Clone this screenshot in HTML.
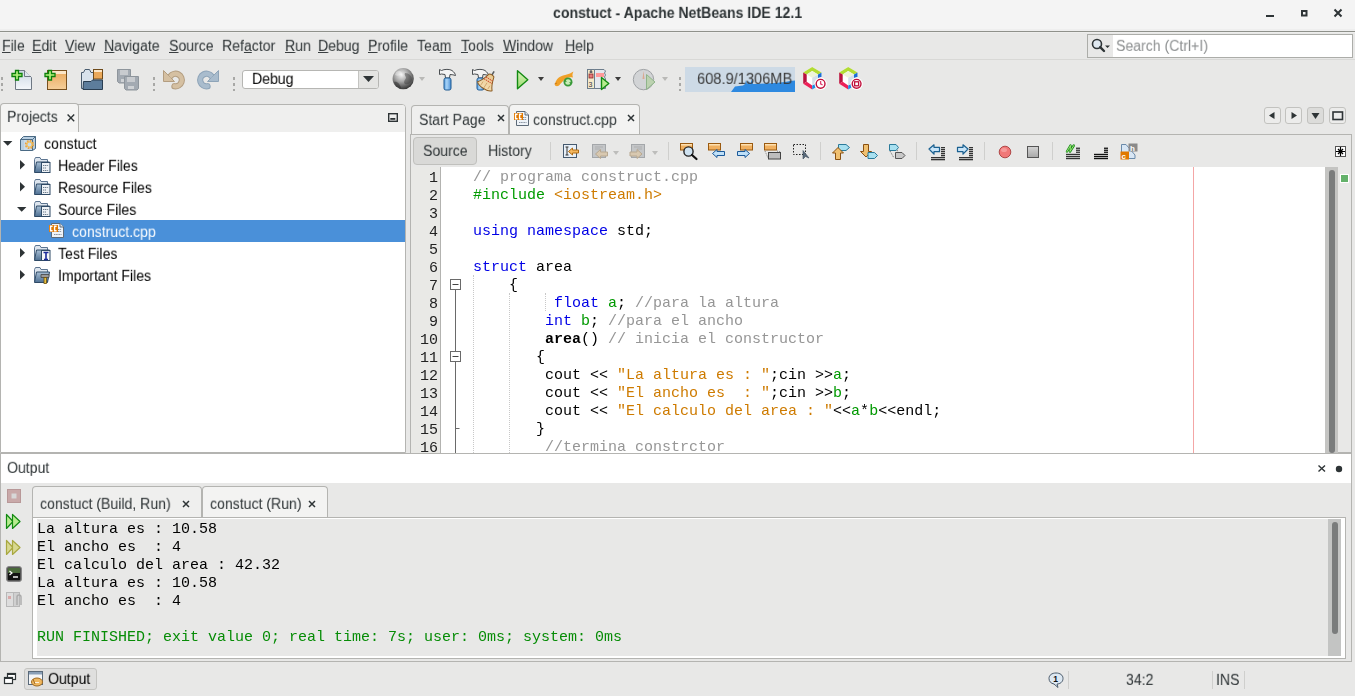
<!DOCTYPE html>
<html><head><meta charset="utf-8">
<style>
*{box-sizing:border-box}
html,body{margin:0;padding:0}
body{width:1355px;height:696px;overflow:hidden;position:relative;background:#e8e8e7;font-family:"Liberation Sans",sans-serif;color:#2e3436}
.a{position:absolute}
.t{position:absolute;white-space:pre}
.m{position:absolute;white-space:pre;font-family:"Liberation Mono",monospace;line-height:18px}
svg{position:absolute;overflow:visible}
.m,.t{will-change:transform}
</style></head><body>
<div class="a" style="left:0px;top:0px;width:1355px;height:31px;background:#f4f4f4;"></div>
<div class="a" style="left:0px;top:29px;width:1355px;height:2px;background:#eeeeee;"></div>
<div class="a" style="left:0px;top:31px;width:1355px;height:1px;background:#8f918b;"></div>
<div class="a" style="left:0px;top:32px;width:1355px;height:1px;background:#eeeeed;"></div>
<div class="t" style="left:553px;top:4.46px;font-size:16px;line-height:18px;color:#2e3436;font-weight:bold;transform:scale(0.88,0.94);transform-origin:0 14.5px;">constuct - Apache NetBeans IDE 12.1</div>
<div class="a" style="left:1266px;top:15px;width:8px;height:2px;background:#2e3436;"></div>
<svg style="left:1300px;top:9px" width="8" height="8" viewBox="0 0 8 8"><rect x="2" y="2" width="4.5" height="4.5" fill="none" stroke="#2e3436" stroke-width="2"/></svg>
<svg style="left:1333px;top:8px" width="10" height="10" viewBox="0 0 10 10"><path d="M1.5 1.5L8.5 8.5M8.5 1.5L1.5 8.5" stroke="#2e3436" stroke-width="2"/></svg>
<div class="t" style="left:2px;top:37.46px;font-size:16px;line-height:18px;color:#2e3436;font-weight:normal;transform:scale(0.88,0.94);transform-origin:0 14.5px;"><span style="text-decoration:underline">F</span>ile</div>
<div class="t" style="left:32px;top:37.46px;font-size:16px;line-height:18px;color:#2e3436;font-weight:normal;transform:scale(0.88,0.94);transform-origin:0 14.5px;"><span style="text-decoration:underline">E</span>dit</div>
<div class="t" style="left:65px;top:37.46px;font-size:16px;line-height:18px;color:#2e3436;font-weight:normal;transform:scale(0.88,0.94);transform-origin:0 14.5px;"><span style="text-decoration:underline">V</span>iew</div>
<div class="t" style="left:104px;top:37.46px;font-size:16px;line-height:18px;color:#2e3436;font-weight:normal;transform:scale(0.88,0.94);transform-origin:0 14.5px;"><span style="text-decoration:underline">N</span>avigate</div>
<div class="t" style="left:169px;top:37.46px;font-size:16px;line-height:18px;color:#2e3436;font-weight:normal;transform:scale(0.88,0.94);transform-origin:0 14.5px;"><span style="text-decoration:underline">S</span>ource</div>
<div class="t" style="left:222px;top:37.46px;font-size:16px;line-height:18px;color:#2e3436;font-weight:normal;transform:scale(0.88,0.94);transform-origin:0 14.5px;">Ref<span style="text-decoration:underline">a</span>ctor</div>
<div class="t" style="left:285px;top:37.46px;font-size:16px;line-height:18px;color:#2e3436;font-weight:normal;transform:scale(0.88,0.94);transform-origin:0 14.5px;"><span style="text-decoration:underline">R</span>un</div>
<div class="t" style="left:318px;top:37.46px;font-size:16px;line-height:18px;color:#2e3436;font-weight:normal;transform:scale(0.88,0.94);transform-origin:0 14.5px;"><span style="text-decoration:underline">D</span>ebug</div>
<div class="t" style="left:368px;top:37.46px;font-size:16px;line-height:18px;color:#2e3436;font-weight:normal;transform:scale(0.88,0.94);transform-origin:0 14.5px;"><span style="text-decoration:underline">P</span>rofile</div>
<div class="t" style="left:417px;top:37.46px;font-size:16px;line-height:18px;color:#2e3436;font-weight:normal;transform:scale(0.88,0.94);transform-origin:0 14.5px;">Tea<span style="text-decoration:underline">m</span></div>
<div class="t" style="left:461px;top:37.46px;font-size:16px;line-height:18px;color:#2e3436;font-weight:normal;transform:scale(0.88,0.94);transform-origin:0 14.5px;"><span style="text-decoration:underline">T</span>ools</div>
<div class="t" style="left:503px;top:37.46px;font-size:16px;line-height:18px;color:#2e3436;font-weight:normal;transform:scale(0.88,0.94);transform-origin:0 14.5px;"><span style="text-decoration:underline">W</span>indow</div>
<div class="t" style="left:565px;top:37.46px;font-size:16px;line-height:18px;color:#2e3436;font-weight:normal;transform:scale(0.88,0.94);transform-origin:0 14.5px;"><span style="text-decoration:underline">H</span>elp</div>
<div class="a" style="left:0px;top:59px;width:1355px;height:1px;background:#d8d8d6;"></div>
<div class="a" style="left:1087px;top:34px;width:266px;height:24px;background:#ffffff;border:1px solid #acada9"></div>
<div class="a" style="left:1088px;top:35px;width:25px;height:22px;background:#e8e8e7;"></div>
<svg style="left:1090px;top:37px" width="22" height="18" viewBox="0 0 22 18"><circle cx="7" cy="7" r="4.5" fill="#dfe8f0" stroke="#2e3436" stroke-width="1.6"/><path d="M10.2 10.2L14 14" stroke="#2e3436" stroke-width="2.4" stroke-linecap="round"/><path d="M15 8.5H20L17.5 11Z" fill="#2e3436"/></svg>
<div class="t" style="left:1116px;top:37.46px;font-size:16px;line-height:18px;color:#8b8e8f;font-weight:normal;transform:scale(0.88,0.94);transform-origin:0 14.5px;">Search (Ctrl+I)</div>
<div class="a" style="left:1px;top:77px;width:2px;height:3px;background:#a8a8a6;"></div>
<div class="a" style="left:1px;top:83px;width:2px;height:3px;background:#a8a8a6;"></div>
<div class="a" style="left:1px;top:89px;width:2px;height:2px;background:#a8a8a6;"></div>
<div class="a" style="left:153px;top:77px;width:2px;height:3px;background:#a8a8a6;"></div>
<div class="a" style="left:153px;top:83px;width:2px;height:3px;background:#a8a8a6;"></div>
<div class="a" style="left:153px;top:89px;width:2px;height:2px;background:#a8a8a6;"></div>
<div class="a" style="left:233px;top:77px;width:2px;height:3px;background:#a8a8a6;"></div>
<div class="a" style="left:233px;top:83px;width:2px;height:3px;background:#a8a8a6;"></div>
<div class="a" style="left:233px;top:89px;width:2px;height:2px;background:#a8a8a6;"></div>
<div class="a" style="left:679px;top:77px;width:2px;height:3px;background:#a8a8a6;"></div>
<div class="a" style="left:679px;top:83px;width:2px;height:3px;background:#a8a8a6;"></div>
<div class="a" style="left:679px;top:89px;width:2px;height:2px;background:#a8a8a6;"></div>
<svg style="left:12px;top:69px" width="22" height="22" viewBox="0 0 22 22"><defs><linearGradient id="gp" x1="0" y1="0" x2="0" y2="1"><stop offset="0" stop-color="#cbd7e4"/><stop offset="1" stop-color="#f4f7fa"/></linearGradient></defs>
<path d="M3.5 1.5H12.5L19.5 8.5V20.5H3.5Z" fill="url(#gp)" stroke="#6e7883"/>
<path d="M12.5 1.5V7.5H19" fill="#dde5ee" stroke="#6e7883"/>
<path d="M3.5 1.5h3v3h3.5v3h-3.5v3.5h-3v-3.5h-3.5v-3h3.5z" fill="#b4f07c" stroke="#0a800a" stroke-width="1.3"/></svg>
<svg style="left:45px;top:69px" width="24" height="22" viewBox="0 0 24 22"><defs><linearGradient id="go" x1="0" y1="0" x2="0" y2="1"><stop offset="0" stop-color="#e9a85c"/><stop offset="1" stop-color="#f5cf9a"/></linearGradient></defs>
<rect x="2.5" y="1.5" width="19" height="19" fill="url(#go)" stroke="#77501f"/>
<rect x="3" y="2" width="18" height="3" fill="#fbe6c8"/>
<path d="M3.5 1.5h3v3h3.5v3h-3.5v3.5h-3v-3.5h-3.5v-3h3.5z" fill="#b4f07c" stroke="#0a800a" stroke-width="1.3"/></svg>
<svg style="left:80px;top:68px" width="24" height="23" viewBox="0 0 24 23"><path d="M1.5 4.5H3.5L5 1.5H9.5L11 4.5H13.5V20.5H1.5Z" fill="#d8e2ec" stroke="#4a5d70"/>
<rect x="13.5" y="1.5" width="9" height="9.5" fill="#eaa85a" stroke="#6e4a1a"/><rect x="14" y="2" width="8" height="2" fill="#fbe6c8"/>
<path d="M3.5 13.5H11L12.5 12H22.5V21.5H3Z" fill="#5d7d9c" stroke="#2a3e52"/></svg>
<svg style="left:116px;top:68px" width="24" height="23" viewBox="0 0 24 23"><path d="M1.5 1.5H14.5V13.5L13 15H3L1.5 13.5Z" fill="#a3aab2" stroke="#8e959c"/><rect x="4" y="2" width="8" height="5" fill="#c8cbcf"/><rect x="5" y="11" width="6" height="3" fill="#cfd2d5"/>
<path d="M8.5 8.5H22.5V20.5L21 22H10L8.5 20.5Z" fill="#a3aab2" stroke="#8e959c"/><rect x="11" y="9" width="8" height="5" fill="#c8cbcf"/><rect x="12" y="18" width="6" height="3" fill="#cfd2d5"/></svg>
<svg style="left:162px;top:69px" width="24" height="22" viewBox="0 0 24 22"><path d="M8.34 7.39A6.3 6.3 0 1 1 12.41 17.20" fill="none" stroke="#b39d80" stroke-width="6.2" stroke-linecap="round"/><path d="M8.34 7.39A6.3 6.3 0 1 1 12.41 17.20" fill="none" stroke="#d5c0a2" stroke-width="4.2" stroke-linecap="round"/>
<path d="M1.5 1.5L1.5 12.5L12.5 12.5Z" fill="#d5c0a2" stroke="#b39d80" stroke-linejoin="round"/><path d="M4 7L8 10" stroke="#d5c0a2" stroke-width="3"/></svg>
<svg style="left:197px;top:69px" width="24" height="22" viewBox="0 0 24 22"><g transform="translate(23,0) scale(-1,1)"><path d="M8.34 7.39A6.3 6.3 0 1 1 12.41 17.20" fill="none" stroke="#8ea4b8" stroke-width="6.2" stroke-linecap="round"/><path d="M8.34 7.39A6.3 6.3 0 1 1 12.41 17.20" fill="none" stroke="#a9bccd" stroke-width="4.2" stroke-linecap="round"/>
<path d="M1.5 1.5L1.5 12.5L12.5 12.5Z" fill="#a9bccd" stroke="#8ea4b8" stroke-linejoin="round"/><path d="M4 7L8 10" stroke="#a9bccd" stroke-width="3"/></g></svg>
<div class="a" style="left:242px;top:70px;width:137px;height:19px;background:#ffffff;border:1px solid #b6b6b3;border-radius:3px"></div>
<div class="a" style="left:358px;top:71px;width:20px;height:17px;background:#e4e4e2;border-left:1px solid #c4c4c1;border-radius:0 2px 2px 0"></div>
<div class="t" style="left:252px;top:70.46px;font-size:16px;line-height:18px;color:#000;font-weight:normal;transform:scale(0.88,0.94);transform-origin:0 14.5px;">Debug</div>
<svg style="left:363px;top:76px" width="11" height="6" viewBox="0 0 11 6"><path d="M0 0H11L5.5 6Z" fill="#2e3436"/></svg>
<svg style="left:391px;top:67px" width="24" height="24" viewBox="0 0 24 24"><defs><radialGradient id="gg" cx="0.42" cy="0.32" r="0.7"><stop offset="0" stop-color="#f4f4f4"/><stop offset="0.45" stop-color="#a8a8a8"/><stop offset="1" stop-color="#333"/></radialGradient></defs>
<circle cx="12.2" cy="11.7" r="10.6" fill="url(#gg)"/><path d="M14 6C18 6 21 9 21 13C20 16 17 18 14 17C12 15 14 13 15 11C15 9 13 8 14 6Z" fill="#3a3a3a" opacity="0.45"/><path d="M3 15C6 14 9 17 10 21C7 21 4 19 3 15Z" fill="#2a2a2a" opacity="0.5"/><path d="M5 5C8 3 11 4 11 7C9 9 6 9 4 8Z" fill="#fff" opacity="0.35"/></svg>
<svg style="left:419px;top:77px" width="6" height="4" viewBox="0 0 6 4"><path d="M0 0H6L3 4Z" fill="#b9b9b7"/></svg>
<svg style="left:436px;top:68px" width="22" height="23" viewBox="0 0 22 23"><defs><linearGradient id="gh" x1="0" y1="0" x2="1" y2="0"><stop offset="0" stop-color="#5a9fe0"/><stop offset="0.4" stop-color="#a8d4f8"/><stop offset="1" stop-color="#4a8ed4"/></linearGradient></defs>
<path d="M3.5 1.5L5.5 2.5C8 1 14 1 16 2.5C18 4 19.5 6 19.5 7.5C18 7 16 6.5 14 6.5L13.5 10H9.5L9 6.5L5.5 6L3.5 6.5Z" fill="#f4f4f4" stroke="#4a4e52" stroke-linejoin="round"/>
<rect x="8" y="10" width="7" height="12" rx="1.8" fill="url(#gh)" stroke="#1f5a92"/></svg>
<svg style="left:469px;top:68px" width="28" height="23" viewBox="0 0 28 23"><defs><linearGradient id="gh" x1="0" y1="0" x2="1" y2="0"><stop offset="0" stop-color="#5a9fe0"/><stop offset="0.4" stop-color="#a8d4f8"/><stop offset="1" stop-color="#4a8ed4"/></linearGradient></defs>
<path d="M3.5 1.5L5.5 2.5C8 1 14 1 16 2.5C18 4 19.5 6 19.5 7.5C18 7 16 6.5 14 6.5L13.5 10H9.5L9 6.5L5.5 6L3.5 6.5Z" fill="#f4f4f4" stroke="#4a4e52" stroke-linejoin="round"/>
<rect x="8" y="10" width="7" height="12" rx="1.8" fill="url(#gh)" stroke="#1f5a92"/><defs><linearGradient id="gb" x1="0" y1="0" x2="0" y2="1"><stop offset="0" stop-color="#e8c890"/><stop offset="1" stop-color="#f4dcb0"/></linearGradient></defs>
<g transform="translate(18.5,14) rotate(32)"><path d="M0 -8V-12.5" stroke="#5a5e62" stroke-width="1.6"/><path d="M-3 -7C-3 -8.8 3 -8.8 3 -7C4 -3 5 1 8.5 5C6 8.5 -6 8.5 -8.5 5C-5 1 -4 -3 -3 -7Z" fill="url(#gb)" stroke="#8a5a20"/>
<path d="M-3.8 -3.5H3.8M-4.5 -1H4.5" stroke="#d04a30" stroke-width="1.1" stroke-dasharray="1.3 0.8"/><path d="M-4 6V2M0 7V1M4 6V2" stroke="#c09050" stroke-width="0.6"/></g></svg>
<svg style="left:515px;top:69px" width="16" height="22" viewBox="0 0 16 22"><defs><linearGradient id="gr" x1="0" y1="0" x2="0" y2="1"><stop offset="0" stop-color="#d8f5b8"/><stop offset="1" stop-color="#9ad870"/></linearGradient></defs>
<path d="M2.5 1.8V19.8L12.8 10.8Z" fill="url(#gr)" stroke="#128a12" stroke-width="1.4" stroke-linejoin="round"/></svg>
<svg style="left:538px;top:77px" width="6" height="4" viewBox="0 0 6 4"><path d="M0 0H6L3 4Z" fill="#3c3c3c"/></svg>
<svg style="left:553px;top:70px" width="22" height="18" viewBox="0 0 22 18"><path d="M2 15C2 11 5 7 10 5.5C13 4.5 15 4.5 17 3.5L20.5 1.5C19.5 3.5 19 5 20 7.5C18 7 16 7 14 8C11 9.5 8 13 6 15.5C4.5 16.5 2.5 16.5 2 15Z" fill="#f0a028"/><path d="M1.5 14L4 13" stroke="#c07010" stroke-width="0.8"/>
<circle cx="15" cy="12" r="3.6" fill="#c8ecb8" stroke="#3a9a3a" stroke-width="1.8"/><path d="M10.5 11.5L12.3 9.3L13.8 12Z M19.5 12.5L17.7 14.7L16.2 12Z" fill="#3a9a3a"/></svg>
<svg style="left:586px;top:68px" width="25" height="23" viewBox="0 0 25 23"><rect x="1.5" y="1.5" width="7" height="19" fill="#f4e9c8" stroke="#6d7d8c"/><path d="M8.5 1.5H18L19.5 3L18.5 5L19.5 7L18.5 9L19.5 11V20.5H8.5Z" fill="#e4e8ee" stroke="#6d7d8c"/>
<rect x="3" y="6" width="4" height="4" fill="#e67a7a" stroke="#8a2a2a" stroke-width="0.8"/><path d="M5 2V5M3.5 4H6.5" stroke="#334" stroke-width="1"/>
<text x="2.6" y="18.5" font-size="7" font-family="Liberation Sans" fill="#334">3</text><rect x="10" y="5" width="8" height="4" fill="#f99"/>
<path d="M15.5 9.5V21.5L22.8 15.5Z" fill="#b8ec90" stroke="#128a12" stroke-width="1.4" stroke-linejoin="round"/></svg>
<svg style="left:615px;top:77px" width="6" height="4" viewBox="0 0 6 4"><path d="M0 0H6L3 4Z" fill="#3c3c3c"/></svg>
<svg style="left:632px;top:68px" width="25" height="23" viewBox="0 0 25 23"><circle cx="11.5" cy="11.6" r="10.2" fill="#d2d4d6" stroke="#9ea1a4"/><path d="M11.5 3L12.5 11H10.5Z" fill="#d9a890"/>
<path d="M14.5 6.5V21.5L23 14Z" fill="#bcd2b0" stroke="#8fb48a" stroke-width="1" stroke-linejoin="round"/></svg>
<svg style="left:662px;top:77px" width="6" height="4" viewBox="0 0 6 4"><path d="M0 0H6L3 4Z" fill="#b9b9b7"/></svg>
<div class="a" style="left:685px;top:67px;width:110px;height:25px;background:#cddae6;"></div>
<svg style="left:685px;top:67px" width="110" height="25" viewBox="0 0 110 25"><path d="M46 25L50 19.5L58 18.5L60 17L61 13L62 17L64 14L65 17.5L67 12L68 17L72 17L80 16.5L90 16L100 15L105 14L110 13.5V25Z" fill="#2e89e0"/></svg>
<div class="t" style="left:697px;top:70.46px;font-size:16px;line-height:18px;color:#3a3a3a;font-weight:normal;transform:scale(0.915,0.94);transform-origin:0 14.5px;">608.9/1306MB</div>
<svg style="left:798px;top:64px" width="32" height="30" viewBox="0 0 32 30"><path d="M14.2 3L23.5 8.6V19.8L14.2 25.4L5.2 19.8V8.6Z" fill="#fff"/>
<path d="M14.2 3L23.5 8.6L20 10.6L14.2 7L8.7 10.6L5.2 8.6Z" fill="#b2dc34"/>
<path d="M5.2 8.6L8.7 10.6V17.8L5.2 19.8Z" fill="#b8123e"/>
<path d="M5.2 19.8L8.7 17.8L14.2 21.4V25.4Z" fill="#ec2058"/>
<path d="M23.5 8.6V13L20 14V10.6Z" fill="#1a6ed6"/><path d="M14.2 21.4L17.5 19.6V23.4L14.2 25.4Z" fill="#1a8ae6"/>
<path d="M8.7 10.6L14.2 7L20 10.6L14.2 13.8Z" fill="#eef4da"/><path d="M14.2 13.8L20 10.6V18L14.2 21.4Z" fill="#d6e0ea"/>
<circle cx="22.6" cy="19.8" r="6.2" fill="#fff"/><circle cx="22.6" cy="19.8" r="4.4" fill="none" stroke="#c0103c" stroke-width="1.4"/><path d="M22.6 17V19.8L24.6 21" fill="none" stroke="#e04070" stroke-width="1.3"/></svg>
<svg style="left:834px;top:64px" width="32" height="30" viewBox="0 0 32 30"><path d="M14.2 3L23.5 8.6V19.8L14.2 25.4L5.2 19.8V8.6Z" fill="#fff"/>
<path d="M14.2 3L23.5 8.6L20 10.6L14.2 7L8.7 10.6L5.2 8.6Z" fill="#b2dc34"/>
<path d="M5.2 8.6L8.7 10.6V17.8L5.2 19.8Z" fill="#b8123e"/>
<path d="M5.2 19.8L8.7 17.8L14.2 21.4V25.4Z" fill="#ec2058"/>
<path d="M23.5 8.6V13L20 14V10.6Z" fill="#1a6ed6"/><path d="M14.2 21.4L17.5 19.6V23.4L14.2 25.4Z" fill="#1a8ae6"/>
<path d="M8.7 10.6L14.2 7L20 10.6L14.2 13.8Z" fill="#eef4da"/><path d="M14.2 13.8L20 10.6V18L14.2 21.4Z" fill="#d6e0ea"/>
<circle cx="22.6" cy="19.8" r="6.2" fill="#fff"/><circle cx="22.6" cy="19.8" r="4.4" fill="none" stroke="#c0103c" stroke-width="1.4"/><rect x="20.6" y="17.8" width="4" height="4" fill="none" stroke="#c0103c" stroke-width="1.3"/></svg>
<div class="a" style="left:0px;top:104px;width:406px;height:349px;background:#ffffff;border:1px solid #b4b4b1;border-radius:4px 4px 0 0"></div>
<div class="a" style="left:1px;top:105px;width:404px;height:27px;background:#efefee;border-radius:3px 3px 0 0"></div>
<div class="a" style="left:0px;top:103px;width:79px;height:29px;background:#f4f4f3;border:1px solid #b4b4b1;border-bottom:none;border-radius:4px 4px 0 0"></div>
<div class="a" style="left:79px;top:132px;width:327px;height:0px;background:#b4b4b1;"></div>
<div class="t" style="left:7px;top:108.46px;font-size:16px;line-height:18px;color:#2e3436;font-weight:normal;transform:scale(0.88,0.94);transform-origin:0 14.5px;">Projects</div>
<svg style="left:67px;top:114px" width="8" height="8" viewBox="0 0 8 8"><path d="M0.6 0.6L7.2 7.2M7.2 0.6L0.6 7.2" stroke="#2e3436" stroke-width="1.4"/></svg>
<svg style="left:388px;top:113px" width="10" height="9" viewBox="0 0 10 9"><rect x="0.7" y="0.7" width="8.6" height="7.6" fill="none" stroke="#2e3436" stroke-width="1.4"/><rect x="2.3" y="5" width="5" height="1.8" fill="#2e3436"/></svg>
<div class="t" style="left:44px;top:135.46px;font-size:16px;line-height:18px;color:#000000;font-weight:normal;transform:scale(0.88,0.94);transform-origin:0 14.5px;">constuct</div>
<svg style="left:3px;top:141px" width="10" height="6" viewBox="0 0 10 6"><path d="M0 0H9.4L4.7 4.8Z" fill="#2e3436"/></svg>
<svg style="left:20px;top:136px" width="17" height="15" viewBox="0 0 17 15"><path d="M0.5 3.5L3.5 0.5H15.5V12.5L12.5 14.5H0.5Z" fill="#b8cfe2" stroke="#4a6a84"/>
<path d="M0.5 3.5H12.5V14.5M12.5 3.5L15.5 0.5" fill="none" stroke="#4a6a84"/><rect x="4" y="4" width="8" height="10" fill="#c9dcec"/>
<circle cx="9.5" cy="8.5" r="3.6" fill="none" stroke="#e8a040" stroke-width="2.2" stroke-dasharray="1.6 1.2"/><circle cx="9.5" cy="8.5" r="2.6" fill="none" stroke="#f0c060" stroke-width="1.3"/></svg>
<div class="t" style="left:58px;top:157.46px;font-size:16px;line-height:18px;color:#000000;font-weight:normal;transform:scale(0.88,0.94);transform-origin:0 14.5px;">Header Files</div>
<svg style="left:20px;top:160px" width="6" height="10" viewBox="0 0 6 10"><path d="M0 0V9.6L5 4.8Z" fill="#2e3436"/></svg>
<svg style="left:34px;top:157px" width="17" height="17" viewBox="0 0 17 17"><defs><linearGradient id="fb" x1="0" y1="0" x2="0" y2="1"><stop offset="0" stop-color="#a9c0d6"/><stop offset="1" stop-color="#4d6f92"/></linearGradient></defs>
<path d="M0.5 14.5V2.5L1.5 0.5H6L7 2.5H13.5V14.5Z" fill="#dde5ee" stroke="#5d7590"/>
<path d="M0.5 15.5L2.5 5H15.5L13.5 15.5Z" fill="url(#fb)" stroke="#2f4a66" stroke-linejoin="round"/><rect x="7.5" y="5.5" width="8.5" height="10" fill="#eef2f6" stroke="#2f4a66"/><path d="M9 8.5H14.5M9 11H12M9 13.5H14.5" stroke="#6a7a8a" stroke-width="1" stroke-dasharray="1.2 0.6"/></svg>
<div class="t" style="left:58px;top:179.46px;font-size:16px;line-height:18px;color:#000000;font-weight:normal;transform:scale(0.88,0.94);transform-origin:0 14.5px;">Resource Files</div>
<svg style="left:20px;top:182px" width="6" height="10" viewBox="0 0 6 10"><path d="M0 0V9.6L5 4.8Z" fill="#2e3436"/></svg>
<svg style="left:34px;top:179px" width="17" height="17" viewBox="0 0 17 17"><defs><linearGradient id="fb" x1="0" y1="0" x2="0" y2="1"><stop offset="0" stop-color="#a9c0d6"/><stop offset="1" stop-color="#4d6f92"/></linearGradient></defs>
<path d="M0.5 14.5V2.5L1.5 0.5H6L7 2.5H13.5V14.5Z" fill="#dde5ee" stroke="#5d7590"/>
<path d="M0.5 15.5L2.5 5H15.5L13.5 15.5Z" fill="url(#fb)" stroke="#2f4a66" stroke-linejoin="round"/><rect x="7.5" y="5.5" width="8.5" height="10" fill="#eef2f6" stroke="#2f4a66"/><path d="M9 8.5H14.5M9 11H12M9 13.5H14.5" stroke="#6a7a8a" stroke-width="1" stroke-dasharray="1.2 0.6"/></svg>
<div class="t" style="left:58px;top:201.46px;font-size:16px;line-height:18px;color:#000000;font-weight:normal;transform:scale(0.88,0.94);transform-origin:0 14.5px;">Source Files</div>
<svg style="left:17px;top:207px" width="10" height="6" viewBox="0 0 10 6"><path d="M0 0H9.4L4.7 4.8Z" fill="#2e3436"/></svg>
<svg style="left:34px;top:201px" width="17" height="17" viewBox="0 0 17 17"><defs><linearGradient id="fb" x1="0" y1="0" x2="0" y2="1"><stop offset="0" stop-color="#a9c0d6"/><stop offset="1" stop-color="#4d6f92"/></linearGradient></defs>
<path d="M0.5 14.5V2.5L1.5 0.5H6L7 2.5H13.5V14.5Z" fill="#dde5ee" stroke="#5d7590"/>
<path d="M0.5 15.5L2.5 5H15.5L13.5 15.5Z" fill="url(#fb)" stroke="#2f4a66" stroke-linejoin="round"/><rect x="7.5" y="5.5" width="8.5" height="10" fill="#eef2f6" stroke="#2f4a66"/><path d="M9 8.5H14.5M9 11H12M9 13.5H14.5" stroke="#6a7a8a" stroke-width="1" stroke-dasharray="1.2 0.6"/></svg>
<div class="a" style="left:1px;top:220px;width:404px;height:22px;background:#4a90d9;"></div>
<div class="t" style="left:72px;top:223.46px;font-size:16px;line-height:18px;color:#ffffff;font-weight:normal;transform:scale(0.88,0.94);transform-origin:0 14.5px;">construct.cpp</div>
<svg style="left:48px;top:222px" width="17" height="17" viewBox="0 0 17 17"><path d="M3.5 1.5H12L15.5 5V15.5H3.5Z" fill="#eef3f8" stroke="#5d6a78"/><path d="M12 1.5V5H15.5" fill="#dfe6ee" stroke="#5d6a78"/><path d="M10 7.5H13.5M10 9.5H13.5M6 12.5H13.5" stroke="#7a8694" stroke-width="0.9" stroke-dasharray="1.2 0.5"/><rect x="1" y="3" width="9" height="7" fill="#e07800"/><path d="M4.6 4.3H2.6V8.7H4.6M8.6 4.3H6.6V8.7H8.6" fill="none" stroke="#fff" stroke-width="1.4"/></svg>
<div class="t" style="left:58px;top:245.46px;font-size:16px;line-height:18px;color:#000000;font-weight:normal;transform:scale(0.88,0.94);transform-origin:0 14.5px;">Test Files</div>
<svg style="left:20px;top:248px" width="6" height="10" viewBox="0 0 6 10"><path d="M0 0V9.6L5 4.8Z" fill="#2e3436"/></svg>
<svg style="left:34px;top:245px" width="17" height="17" viewBox="0 0 17 17"><defs><linearGradient id="fb" x1="0" y1="0" x2="0" y2="1"><stop offset="0" stop-color="#a9c0d6"/><stop offset="1" stop-color="#4d6f92"/></linearGradient></defs>
<path d="M0.5 14.5V2.5L1.5 0.5H6L7 2.5H13.5V14.5Z" fill="#dde5ee" stroke="#5d7590"/>
<path d="M0.5 15.5L2.5 5H15.5L13.5 15.5Z" fill="url(#fb)" stroke="#2f4a66" stroke-linejoin="round"/><rect x="7.5" y="5.5" width="8.5" height="10" fill="#f4f6f8" stroke="#2f4a66"/><path d="M9.5 7.5H14.5M12 7.5V14.5M10 14.5H14" stroke="#1a2a9a" stroke-width="1.6"/></svg>
<div class="t" style="left:58px;top:267.46px;font-size:16px;line-height:18px;color:#000000;font-weight:normal;transform:scale(0.88,0.94);transform-origin:0 14.5px;">Important Files</div>
<svg style="left:20px;top:270px" width="6" height="10" viewBox="0 0 6 10"><path d="M0 0V9.6L5 4.8Z" fill="#2e3436"/></svg>
<svg style="left:34px;top:267px" width="17" height="17" viewBox="0 0 17 17"><defs><linearGradient id="fb" x1="0" y1="0" x2="0" y2="1"><stop offset="0" stop-color="#a9c0d6"/><stop offset="1" stop-color="#4d6f92"/></linearGradient></defs>
<path d="M0.5 14.5V2.5L1.5 0.5H6L7 2.5H13.5V14.5Z" fill="#dde5ee" stroke="#5d7590"/>
<path d="M0.5 15.5L2.5 5H15.5L13.5 15.5Z" fill="url(#fb)" stroke="#2f4a66" stroke-linejoin="round"/><path d="M7 7.5H15V10.5H7Z" fill="#9a9a9a" stroke="#444" stroke-width="0.8"/><rect x="10" y="10.5" width="2.5" height="6" fill="#e8c040" stroke="#6a5010" stroke-width="0.8"/></svg>
<div class="a" style="left:410px;top:134px;width:942px;height:319px;background:#e8e8e7;border:1px solid #b4b4b1"></div>
<div class="a" style="left:411px;top:105px;width:98px;height:29px;background:#efefee;border:1px solid #b4b4b1;border-bottom:none;border-radius:4px 4px 0 0"></div>
<div class="a" style="left:509px;top:104px;width:131px;height:30px;background:#f3f3f2;border:1px solid #b4b4b1;border-bottom:none;border-radius:4px 4px 0 0"></div>
<div class="t" style="left:419px;top:111.46px;font-size:16px;line-height:18px;color:#2e3436;font-weight:normal;transform:scale(0.88,0.94);transform-origin:0 14.5px;">Start Page</div>
<svg style="left:497px;top:114px" width="8" height="8" viewBox="0 0 8 8"><path d="M1 1L7 7M7 1L1 7" stroke="#2e3436" stroke-width="1.5"/></svg>
<div class="t" style="left:533px;top:111.46px;font-size:16px;line-height:18px;color:#2e3436;font-weight:normal;transform:scale(0.88,0.94);transform-origin:0 14.5px;">construct.cpp</div>
<svg style="left:627px;top:114px" width="8" height="8" viewBox="0 0 8 8"><path d="M1 1L7 7M7 1L1 7" stroke="#2e3436" stroke-width="1.5"/></svg>
<svg style="left:513px;top:110px" width="17" height="16" viewBox="0 0 17 16"><path d="M3.5 1.5H12L15.5 5V15.5H3.5Z" fill="#eef3f8" stroke="#5d6a78"/><path d="M12 1.5V5H15.5" fill="#dfe6ee" stroke="#5d6a78"/><path d="M10 7.5H13.5M10 9.5H13.5M6 12.5H13.5" stroke="#7a8694" stroke-width="0.9" stroke-dasharray="1.2 0.5"/><rect x="1" y="3" width="9" height="7" fill="#e07800"/><path d="M4.6 4.3H2.6V8.7H4.6M8.6 4.3H6.6V8.7H8.6" fill="none" stroke="#fff" stroke-width="1.4"/></svg>
<div class="a" style="left:1264px;top:107px;width:17px;height:17px;background:#ececeb;border:1px solid #c2c2bf;border-radius:3px"></div>
<svg style="left:1264px;top:107px" width="17" height="17" viewBox="0 0 17 17"><path d="M5 8.5L10.5 5V12Z" fill="#2e3436"/></svg>
<div class="a" style="left:1285px;top:107px;width:17px;height:17px;background:#ececeb;border:1px solid #c2c2bf;border-radius:3px"></div>
<svg style="left:1285px;top:107px" width="17" height="17" viewBox="0 0 17 17"><path d="M12 8.5L6.5 5V12Z" fill="#2e3436"/></svg>
<div class="a" style="left:1307px;top:107px;width:17px;height:17px;background:#dcdcda;border:1px solid #c2c2bf;border-radius:3px"></div>
<svg style="left:1307px;top:107px" width="17" height="17" viewBox="0 0 17 17"><path d="M4.5 6H12.5L8.5 12Z" fill="#2e3436"/></svg>
<div class="a" style="left:1329px;top:107px;width:17px;height:17px;background:#ececeb;border:1px solid #c2c2bf;border-radius:3px"></div>
<svg style="left:1329px;top:107px" width="17" height="17" viewBox="0 0 17 17"><rect x="4" y="5" width="9.5" height="7.5" fill="none" stroke="#2e3436" stroke-width="1.6"/></svg>
<div class="a" style="left:411px;top:167px;width:30px;height:286px;background:#e9e9e6;"></div>
<div class="a" style="left:440px;top:167px;width:1px;height:286px;background:#b3b3b0;"></div>
<div class="a" style="left:441px;top:167px;width:884px;height:286px;background:#ffffff;"></div>
<div class="a" style="left:1193px;top:167px;width:1px;height:286px;background:#f4a6a6;"></div>
<div class="a" style="left:1325px;top:167px;width:13px;height:286px;background:#c4c4c2;"></div>
<div class="a" style="left:1329px;top:170px;width:6px;height:283px;background:#7a7c7c;border-radius:3px"></div>
<div class="a" style="left:1340px;top:174px;width:9px;height:9px;background:#63b16a;border:1px solid #fff"></div>
<svg style="left:1335px;top:146px" width="11" height="11" viewBox="0 0 11 11"><rect x="0.5" y="0.5" width="10" height="10" fill="#fff" stroke="#555"/><path d="M5.5 1V10M1 5.5H10" stroke="#000" stroke-width="1.2"/><path d="M3 3L8 8M8 3L3 8" stroke="#000" stroke-width="1.4"/></svg>
<div class="a" style="left:413px;top:137px;width:64px;height:28px;background:#d9d9d7;border:1px solid #c0c0bd;border-radius:4px"></div>
<div class="t" style="left:423px;top:142.46px;font-size:16px;line-height:18px;color:#2e3436;font-weight:normal;transform:scale(0.88,0.94);transform-origin:0 14.5px;">Source</div>
<div class="t" style="left:488px;top:142.46px;font-size:16px;line-height:18px;color:#2e3436;font-weight:normal;transform:scale(0.88,0.94);transform-origin:0 14.5px;">History</div>
<div class="a" style="left:550px;top:142px;width:1px;height:18px;background:#cfcfcd;"></div>
<div class="a" style="left:668px;top:142px;width:1px;height:18px;background:#cfcfcd;"></div>
<div class="a" style="left:820px;top:142px;width:1px;height:18px;background:#cfcfcd;"></div>
<div class="a" style="left:916px;top:142px;width:1px;height:18px;background:#cfcfcd;"></div>
<div class="a" style="left:984px;top:142px;width:1px;height:18px;background:#cfcfcd;"></div>
<div class="a" style="left:1052px;top:142px;width:1px;height:18px;background:#cfcfcd;"></div>
<svg style="left:562px;top:143px" width="20" height="16" viewBox="0 0 20 16"><rect x="1.5" y="1.5" width="13" height="13" fill="#e8f0f8" stroke="#45596e"/><path d="M3.5 4H6.5M5 4V12M3.5 12H6.5" stroke="#333" stroke-width="1"/>
<path d="M6.5 8.5L10.5 5V7H16.5V10H10.5V12Z" fill="#f4b860" stroke="#b06a10" stroke-linejoin="round"/></svg>
<svg style="left:591px;top:143px" width="18" height="17" viewBox="0 0 18 17"><rect x="1.5" y="1.5" width="13" height="13" fill="#c4c6c8" stroke="#a4a7aa"/><path d="M4 4H12M4 6H9" stroke="#aaa" stroke-width="0.8"/><path d="M4.5 11L9.5 6.5V9H16.5V13H9.5V15.5Z" fill="#d8c8b0" stroke="#b8a890" stroke-linejoin="round"/></svg>
<svg style="left:613px;top:151px" width="6" height="4" viewBox="0 0 6 4"><path d="M0 0H6L3 4Z" fill="#bdbdbb"/></svg>
<svg style="left:629px;top:143px" width="18" height="17" viewBox="0 0 18 17"><rect x="2.5" y="1.5" width="13" height="13" fill="#c4c6c8" stroke="#a4a7aa"/><path d="M5 4H13M8 6H13" stroke="#aaa" stroke-width="0.8"/><path d="M13 11L8 6.5V9H1V13H8V15.5Z" fill="#d8c8b0" stroke="#b8a890" stroke-linejoin="round"/></svg>
<svg style="left:652px;top:151px" width="6" height="4" viewBox="0 0 6 4"><path d="M0 0H6L3 4Z" fill="#bdbdbb"/></svg>
<svg style="left:680px;top:143px" width="19" height="17" viewBox="0 0 19 17"><rect x="0.5" y="0.5" width="12" height="6.5" fill="#f0b060" stroke="#9a5a10"/><rect x="1" y="1" width="11" height="1.5" fill="#fde0b0"/><circle cx="8.5" cy="8.5" r="4.6" fill="#cfe2f0" stroke="#222" stroke-width="1.4"/><path d="M12 12L16.5 16" stroke="#111" stroke-width="2.2" stroke-linecap="round"/></svg>
<svg style="left:708px;top:143px" width="19" height="17" viewBox="0 0 19 17"><rect x="0.5" y="0.5" width="12" height="6.5" fill="#f0b060" stroke="#9a5a10"/><rect x="1" y="1" width="11" height="1.5" fill="#fde0b0"/><path d="M4.5 10.5L9 6.5V8.5H16.5V12.5H9V14.5Z" fill="#bfe0f8" stroke="#1c5a9a" stroke-linejoin="round"/></svg>
<svg style="left:736px;top:143px" width="19" height="17" viewBox="0 0 19 17"><rect x="4.5" y="0.5" width="12" height="6.5" fill="#f0b060" stroke="#9a5a10"/><rect x="5" y="1" width="11" height="1.5" fill="#fde0b0"/><path d="M13.5 10.5L9 6.5V8.5H1.5V12.5H9V14.5Z" fill="#bfe0f8" stroke="#1c5a9a" stroke-linejoin="round"/></svg>
<svg style="left:764px;top:143px" width="19" height="17" viewBox="0 0 19 17"><rect x="0.5" y="0.5" width="12" height="6.5" fill="#f0b060" stroke="#9a5a10"/><rect x="1" y="1" width="11" height="1.5" fill="#fde0b0"/><rect x="4.5" y="9.5" width="12" height="6.5" fill="#bdbdbd" stroke="#444"/><path d="M1 8L4 15M13 8L17 9" stroke="#666" stroke-width="0.8" stroke-dasharray="1 1"/></svg>
<svg style="left:792px;top:143px" width="19" height="17" viewBox="0 0 19 17"><rect x="1.5" y="1.5" width="12" height="10" fill="none" stroke="#222" stroke-dasharray="1.5 1.5"/><path d="M11 7.5V16L13.5 13.5L17 15Z" fill="#5a6a7a" stroke="#3a4a5a" stroke-width="0.6"/></svg>
<svg style="left:832px;top:143px" width="19" height="17" viewBox="0 0 19 17"><path d="M6.5 1.5H14L17.5 4.5L14 7.5H6.5Z" fill="#a8e0f0" stroke="#2a7a9a"/><path d="M0.5 10L6 4.5L11.5 10H8.5V16.5H3.5V10Z" fill="#f0c070" stroke="#8a5010" stroke-linejoin="round"/></svg>
<svg style="left:860px;top:143px" width="19" height="17" viewBox="0 0 19 17"><path d="M3.5 1.5H8.5V8.5H11.5L6 14L0.5 8.5H3.5Z" fill="#f0c070" stroke="#8a5010" stroke-linejoin="round"/><path d="M8 9.5H14.5L17.5 12.5L14.5 15.5H8Z" fill="#a8e0f0" stroke="#2a7a9a"/></svg>
<svg style="left:888px;top:143px" width="19" height="17" viewBox="0 0 19 17"><path d="M1.5 1.5H8L10.5 4.5L8 7.5H1.5Z" fill="#a8e0f0" stroke="#2a7a9a"/><path d="M7.5 9.5H14L17 12.5L14 15.5H7.5Z" fill="#c8c8c8" stroke="#555"/><path d="M2 8L6 15M9 7L10 9" stroke="#444" stroke-width="0.8" stroke-dasharray="1 1"/></svg>
<svg style="left:928px;top:144px" width="18" height="17" viewBox="0 0 18 17"><path d="M1 5L6 0.8V3.3H11.5V7.7H6V10.2Z" fill="#c8e4f8" stroke="#1a6090" stroke-width="1.2" stroke-linejoin="round"/><rect x="13" y="3" width="4" height="1.3" fill="#333"/><rect x="13" y="5" width="4" height="1.3" fill="#333"/><rect x="13" y="7" width="4" height="1.3" fill="#333"/><rect x="13" y="9" width="4" height="1.3" fill="#333"/><rect x="13" y="11" width="4" height="1.3" fill="#333"/><rect x="3" y="13" width="14" height="1.3" fill="#333"/><rect x="3" y="15" width="14" height="1.3" fill="#333"/></svg>
<svg style="left:956px;top:144px" width="18" height="17" viewBox="0 0 18 17"><path d="M12 5L7 0.8V3.3H1.5V7.7H7V10.2Z" fill="#c8e4f8" stroke="#1a6090" stroke-width="1.2" stroke-linejoin="round"/><rect x="13" y="3" width="4" height="1.3" fill="#333"/><rect x="13" y="5" width="4" height="1.3" fill="#333"/><rect x="13" y="7" width="4" height="1.3" fill="#333"/><rect x="13" y="9" width="4" height="1.3" fill="#333"/><rect x="13" y="11" width="4" height="1.3" fill="#333"/><rect x="3" y="13" width="14" height="1.3" fill="#333"/><rect x="3" y="15" width="14" height="1.3" fill="#333"/></svg>
<svg style="left:998px;top:145px" width="14" height="14" viewBox="0 0 14 14"><circle cx="7" cy="7" r="5.8" fill="#f07878" stroke="#b04848"/><ellipse cx="6" cy="5" rx="3" ry="2" fill="#f8b0b0" opacity="0.6"/></svg>
<svg style="left:1026px;top:145px" width="14" height="14" viewBox="0 0 14 14"><defs><linearGradient id="gs" x1="0" y1="0" x2="0" y2="1"><stop offset="0" stop-color="#d4d4d4"/><stop offset="1" stop-color="#a8a8a8"/></linearGradient></defs><rect x="1.5" y="1.5" width="11" height="11" fill="url(#gs)" stroke="#555"/></svg>
<svg style="left:1065px;top:144px" width="17" height="17" viewBox="0 0 17 17"><path d="M2 7.5L5.5 1.5L5 7.5L8.8 1.5" fill="none" stroke="#1a8a1a" stroke-width="2.4" stroke-linecap="round" stroke-linejoin="round"/><path d="M2 7.5L5.5 1.5L5 7.5L8.8 1.5" fill="none" stroke="#a8f080" stroke-width="0.9" stroke-linecap="round"/><rect x="11" y="3.6" width="4" height="1.3" fill="#333"/><rect x="11" y="5.6" width="4" height="1.3" fill="#333"/><rect x="11" y="7.6" width="4" height="1.3" fill="#333"/><rect x="1" y="9.8" width="14" height="1.3" fill="#333"/><rect x="1" y="11.9" width="14" height="1.3" fill="#333"/><rect x="1" y="13.9" width="14" height="1.3" fill="#333"/></svg>
<svg style="left:1093px;top:144px" width="17" height="17" viewBox="0 0 17 17"><rect x="11" y="3.6" width="4" height="1.3" fill="#111"/><rect x="11" y="5.6" width="4" height="1.3" fill="#111"/><rect x="11" y="7.6" width="4" height="1.3" fill="#111"/><rect x="1" y="9.8" width="14" height="1.3" fill="#111"/><rect x="1" y="11.9" width="14" height="1.3" fill="#111"/><rect x="1" y="13.9" width="14" height="1.3" fill="#111"/></svg>
<svg style="left:1120px;top:143px" width="18" height="17" viewBox="0 0 18 17"><path d="M1.5 1.5H6L15 12V15.5H4.5L1.5 12Z" fill="#d8e6f4" stroke="#6a8aaa"/><rect x="8.5" y="0.5" width="9" height="8" fill="#8a8a8a"/><text x="10" y="7.5" font-size="8" font-weight="bold" font-family="Liberation Sans" fill="#fff">h</text><rect x="0.5" y="8.5" width="8.5" height="8" fill="#e07800"/><text x="1.6" y="15.5" font-size="8" font-weight="bold" font-family="Liberation Sans" fill="#fff">c</text></svg>
<div class="a" style="left:441px;top:167px;width:884px;height:286px;overflow:hidden">
<div class="a" style="left:32px;top:108px;width:1px;height:180px;border-left:1px dotted #c8c8c8"></div>
<div class="a" style="left:68px;top:126px;width:1px;height:162px;border-left:1px dotted #c8c8c8"></div>
<div class="a" style="left:104px;top:126px;width:1px;height:18px;border-left:1px dotted #c8c8c8"></div>
<div class="m" style="left:32px;top:2.00px;font-size:15px;color:#000;"><span style="color:#969696">// programa construct.cpp</span></div>
<div class="m" style="left:32px;top:20.00px;font-size:15px;color:#000;"><span style="color:#009b00">#include</span> <span style="color:#ce7b00">&lt;iostream.h&gt;</span></div>
<div class="m" style="left:32px;top:38.00px;font-size:15px;color:#000;"></div>
<div class="m" style="left:32px;top:56.00px;font-size:15px;color:#000;"><span style="color:#0000e6">using</span> <span style="color:#0000e6">namespace</span><span style="color:#000"> std;</span></div>
<div class="m" style="left:32px;top:74.00px;font-size:15px;color:#000;"></div>
<div class="m" style="left:32px;top:92.00px;font-size:15px;color:#000;"><span style="color:#0000e6">struct</span><span style="color:#000"> area</span></div>
<div class="m" style="left:32px;top:110.00px;font-size:15px;color:#000;"><span style="color:#000">    {</span></div>
<div class="m" style="left:32px;top:128.00px;font-size:15px;color:#000;">         <span style="color:#0000e6">float</span> <span style="color:#009900">a</span><span style="color:#000">;</span><span style="color:#969696"> //para la altura</span></div>
<div class="m" style="left:32px;top:146.00px;font-size:15px;color:#000;">        <span style="color:#0000e6">int</span> <span style="color:#009900">b</span><span style="color:#000">;</span><span style="color:#969696"> //para el ancho</span></div>
<div class="m" style="left:32px;top:164.00px;font-size:15px;color:#000;">        <span style="color:#000"><b>area</b>()</span><span style="color:#969696"> // inicia el constructor</span></div>
<div class="m" style="left:32px;top:182.00px;font-size:15px;color:#000;"><span style="color:#000">       {</span></div>
<div class="m" style="left:32px;top:200.00px;font-size:15px;color:#000;"><span style="color:#000">        cout &lt;&lt; </span><span style="color:#ce7b00">"La altura es : "</span><span style="color:#000">;cin &gt;&gt;</span><span style="color:#009900">a</span><span style="color:#000">;</span></div>
<div class="m" style="left:32px;top:218.00px;font-size:15px;color:#000;"><span style="color:#000">        cout &lt;&lt; </span><span style="color:#ce7b00">"El ancho es  : "</span><span style="color:#000">;cin &gt;&gt;</span><span style="color:#009900">b</span><span style="color:#000">;</span></div>
<div class="m" style="left:32px;top:236.00px;font-size:15px;color:#000;"><span style="color:#000">        cout &lt;&lt; </span><span style="color:#ce7b00">"El calculo del area : "</span><span style="color:#000">&lt;&lt;</span><span style="color:#009900">a</span><span style="color:#000">*</span><span style="color:#009900">b</span><span style="color:#000">&lt;&lt;endl;</span></div>
<div class="m" style="left:32px;top:254.00px;font-size:15px;color:#000;"><span style="color:#000">       }</span></div>
<div class="m" style="left:32px;top:272.00px;font-size:15px;color:#000;"><span style="color:#969696">        //termina constrctor</span></div>
</div>
<div class="m" style="left:429px;top:170.00px;font-size:15px;color:#222;">1</div>
<div class="m" style="left:429px;top:188.00px;font-size:15px;color:#222;">2</div>
<div class="m" style="left:429px;top:206.00px;font-size:15px;color:#222;">3</div>
<div class="m" style="left:429px;top:224.00px;font-size:15px;color:#222;">4</div>
<div class="m" style="left:429px;top:242.00px;font-size:15px;color:#222;">5</div>
<div class="m" style="left:429px;top:260.00px;font-size:15px;color:#222;">6</div>
<div class="m" style="left:429px;top:278.00px;font-size:15px;color:#222;">7</div>
<div class="m" style="left:429px;top:296.00px;font-size:15px;color:#222;">8</div>
<div class="m" style="left:429px;top:314.00px;font-size:15px;color:#222;">9</div>
<div class="m" style="left:420px;top:332.00px;font-size:15px;color:#222;">10</div>
<div class="m" style="left:420px;top:350.00px;font-size:15px;color:#222;">11</div>
<div class="m" style="left:420px;top:368.00px;font-size:15px;color:#222;">12</div>
<div class="m" style="left:420px;top:386.00px;font-size:15px;color:#222;">13</div>
<div class="m" style="left:420px;top:404.00px;font-size:15px;color:#222;">14</div>
<div class="m" style="left:420px;top:422.00px;font-size:15px;color:#222;">15</div>
<div class="m" style="left:420px;top:440.00px;font-size:15px;color:#222;">16</div>
<svg style="left:449px;top:278px" width="13" height="175" viewBox="0 0 13 175"><rect x="1.5" y="1.5" width="10" height="10" fill="#fff" stroke="#6a6a6a"/><path d="M3.5 6.5H9.5" stroke="#444"/><path d="M6.5 11.5V73.5" stroke="#6a6a6a"/><rect x="1.5" y="73.5" width="10" height="10" fill="#fff" stroke="#6a6a6a"/><path d="M3.5 78.5H9.5" stroke="#444"/><path d="M6.5 83.5V175M6.5 150.5H10.5" stroke="#6a6a6a"/></svg>
<div class="a" style="left:0px;top:453px;width:1352px;height:209px;background:#e8e8e7;border:1px solid #b4b4b1"></div>
<div class="a" style="left:1px;top:454px;width:1350px;height:29px;background:#ffffff;"></div>
<div class="t" style="left:7px;top:459.46px;font-size:16px;line-height:18px;color:#2e3436;font-weight:normal;transform:scale(0.88,0.94);transform-origin:0 14.5px;">Output</div>
<svg style="left:1318px;top:465px" width="8" height="7" viewBox="0 0 8 7"><path d="M0.5 0.5L7 6.5M7 0.5L0.5 6.5" stroke="#2e3436" stroke-width="1.4"/></svg>
<svg style="left:1335px;top:465px" width="8" height="8" viewBox="0 0 8 8"><circle cx="4" cy="4" r="3.2" fill="#2e3436"/></svg>
<div class="a" style="left:32px;top:486px;width:170px;height:33px;background:#efefee;border:1px solid #b4b4b1;border-bottom:none;border-radius:4px 4px 0 0"></div>
<div class="a" style="left:202px;top:486px;width:126px;height:33px;background:#f3f3f2;border:1px solid #b4b4b1;border-bottom:none;border-radius:4px 4px 0 0"></div>
<div class="t" style="left:40px;top:495.46px;font-size:16px;line-height:18px;color:#2e3436;font-weight:normal;transform:scale(0.88,0.94);transform-origin:0 14.5px;">constuct (Build, Run)</div>
<svg style="left:182px;top:500px" width="8" height="8" viewBox="0 0 8 8"><path d="M1 1L7 7M7 1L1 7" stroke="#2e3436" stroke-width="1.5"/></svg>
<div class="t" style="left:210px;top:495.46px;font-size:16px;line-height:18px;color:#2e3436;font-weight:normal;transform:scale(0.88,0.94);transform-origin:0 14.5px;">constuct (Run)</div>
<svg style="left:308px;top:500px" width="8" height="8" viewBox="0 0 8 8"><path d="M1 1L7 7M7 1L1 7" stroke="#2e3436" stroke-width="1.5"/></svg>
<div class="a" style="left:32px;top:517px;width:1314px;height:142px;background:#ffffff;border:1px solid #b4b4b1"></div>
<div class="a" style="left:37px;top:519px;width:1291px;height:137px;background:#e8e8e7;"></div>
<div class="m" style="left:37px;top:521.00px;font-size:15px;color:#000;">La altura es : 10.58</div>
<div class="m" style="left:37px;top:539.00px;font-size:15px;color:#000;">El ancho es  : 4</div>
<div class="m" style="left:37px;top:557.00px;font-size:15px;color:#000;">El calculo del area : 42.32</div>
<div class="m" style="left:37px;top:575.00px;font-size:15px;color:#000;">La altura es : 10.58</div>
<div class="m" style="left:37px;top:593.00px;font-size:15px;color:#000;">El ancho es  : 4</div>
<div class="m" style="left:37px;top:611.00px;font-size:15px;color:#000;"></div>
<div class="m" style="left:37px;top:629.00px;font-size:15px;color:#068c06;">RUN FINISHED; exit value 0; real time: 7s; user: 0ms; system: 0ms</div>
<div class="a" style="left:1328px;top:519px;width:13px;height:137px;background:#c3c4c3;"></div>
<div class="a" style="left:1332px;top:522px;width:6px;height:112px;background:#7a7c7c;border-radius:3px"></div>
<svg style="left:6px;top:488px" width="16" height="16" viewBox="0 0 16 16"><rect x="1.5" y="1.5" width="13" height="13" fill="#c9a9a9" stroke="#b89898"/><rect x="5.5" y="5.5" width="5" height="5" fill="#d8d8d8"/></svg>
<svg style="left:5px;top:513px" width="18" height="18" viewBox="0 0 18 18"><path d="M1.5 1.5V15.5L8 8.5Z" fill="#b8ec90" stroke="#128a12" stroke-width="1.2" stroke-linejoin="round"/><path d="M7.5 1.5V15.5L15 8.5Z" fill="#b8ec90" stroke="#128a12" stroke-width="1.2" stroke-linejoin="round"/></svg>
<svg style="left:5px;top:539px" width="18" height="18" viewBox="0 0 18 18"><path d="M1.5 1.5V15.5L8 8.5Z" fill="#d8d890" stroke="#a8a840" stroke-width="1.2" stroke-linejoin="round"/><path d="M7.5 1.5V15.5L15 8.5Z" fill="#d8d890" stroke="#a8a840" stroke-width="1.2" stroke-linejoin="round"/></svg>
<svg style="left:5px;top:565px" width="18" height="18" viewBox="0 0 18 18"><rect x="1.5" y="1.5" width="15" height="15" rx="2.5" fill="#555" stroke="#888"/><rect x="3" y="3" width="12" height="12" fill="#111"/><rect x="3" y="3" width="12" height="5" fill="#4a6a3a"/><path d="M4.5 6L7 8L4.5 10" fill="none" stroke="#fff" stroke-width="1.2"/><path d="M8 12H13" stroke="#fff" stroke-width="1.4"/></svg>
<svg style="left:5px;top:591px" width="18" height="17" viewBox="0 0 18 17"><rect x="1.5" y="1.5" width="7" height="14" fill="#ddd" stroke="#b8b8b8"/><rect x="8.5" y="1.5" width="6" height="14" fill="#d0d0d0" stroke="#b8b8b8"/><rect x="3" y="5" width="3" height="3" fill="#d8a8a8"/><path d="M12 14V6A2 2 0 0 1 16 6V14" fill="none" stroke="#aaa" stroke-width="1.4"/></svg>
<svg style="left:4px;top:673px" width="13" height="12" viewBox="0 0 13 12"><rect x="3.5" y="0.5" width="8" height="6" fill="#fff" stroke="#2e3436" stroke-width="1.2"/><rect x="0.5" y="4.5" width="8" height="6" fill="#fff" stroke="#2e3436" stroke-width="1.2"/><path d="M0.5 5.3H8.5M3.5 1.3H11.5" stroke="#2e3436" stroke-width="1.6"/></svg>
<div class="a" style="left:24px;top:668px;width:73px;height:22px;background:#dfdfde;border:1px solid #c4c4c1;border-radius:3px"></div>
<svg style="left:27px;top:670px" width="18" height="18" viewBox="0 0 18 18"><rect x="1.5" y="1.5" width="14" height="13" fill="#f4f6f8" stroke="#5a6a7a"/><rect x="2" y="2" width="13" height="2.5" fill="#8aa0b8"/><ellipse cx="10" cy="12" rx="5.5" ry="4" fill="#f0b860" stroke="#a06a20"/><path d="M6 9L8 14" stroke="#a06a20"/><path d="M8 12.5H12" stroke="#fff" stroke-width="0.8"/></svg>
<div class="t" style="left:48px;top:670.46px;font-size:16px;line-height:18px;color:#000;font-weight:normal;transform:scale(0.88,0.94);transform-origin:0 14.5px;">Output</div>
<svg style="left:1048px;top:672px" width="17" height="17" viewBox="0 0 17 17"><path d="M8 1C12 1 15 3 15 6.5C15 10 12 12 9 12L10 15.5L6 12C3 11.5 1 9.5 1 6.5C1 3 4 1 8 1Z" fill="#dde8f2" stroke="#4a5a6a"/><text x="5.2" y="10" font-size="8.5" font-weight="bold" font-family="Liberation Sans" fill="#111">1</text></svg>
<div class="t" style="left:1126px;top:671.46px;font-size:16px;line-height:18px;color:#2e3436;font-weight:normal;transform:scale(0.88,0.94);transform-origin:0 14.5px;">34:2</div>
<div class="t" style="left:1216px;top:671.46px;font-size:16px;line-height:18px;color:#2e3436;font-weight:normal;transform:scale(0.88,0.94);transform-origin:0 14.5px;">INS</div>
<div class="a" style="left:1068px;top:671px;width:1px;height:18px;background:#cfcfcd;"></div>
<div class="a" style="left:1212px;top:671px;width:1px;height:18px;background:#cfcfcd;"></div>
<div class="a" style="left:1244px;top:671px;width:1px;height:18px;background:#cfcfcd;"></div>
</body></html>
